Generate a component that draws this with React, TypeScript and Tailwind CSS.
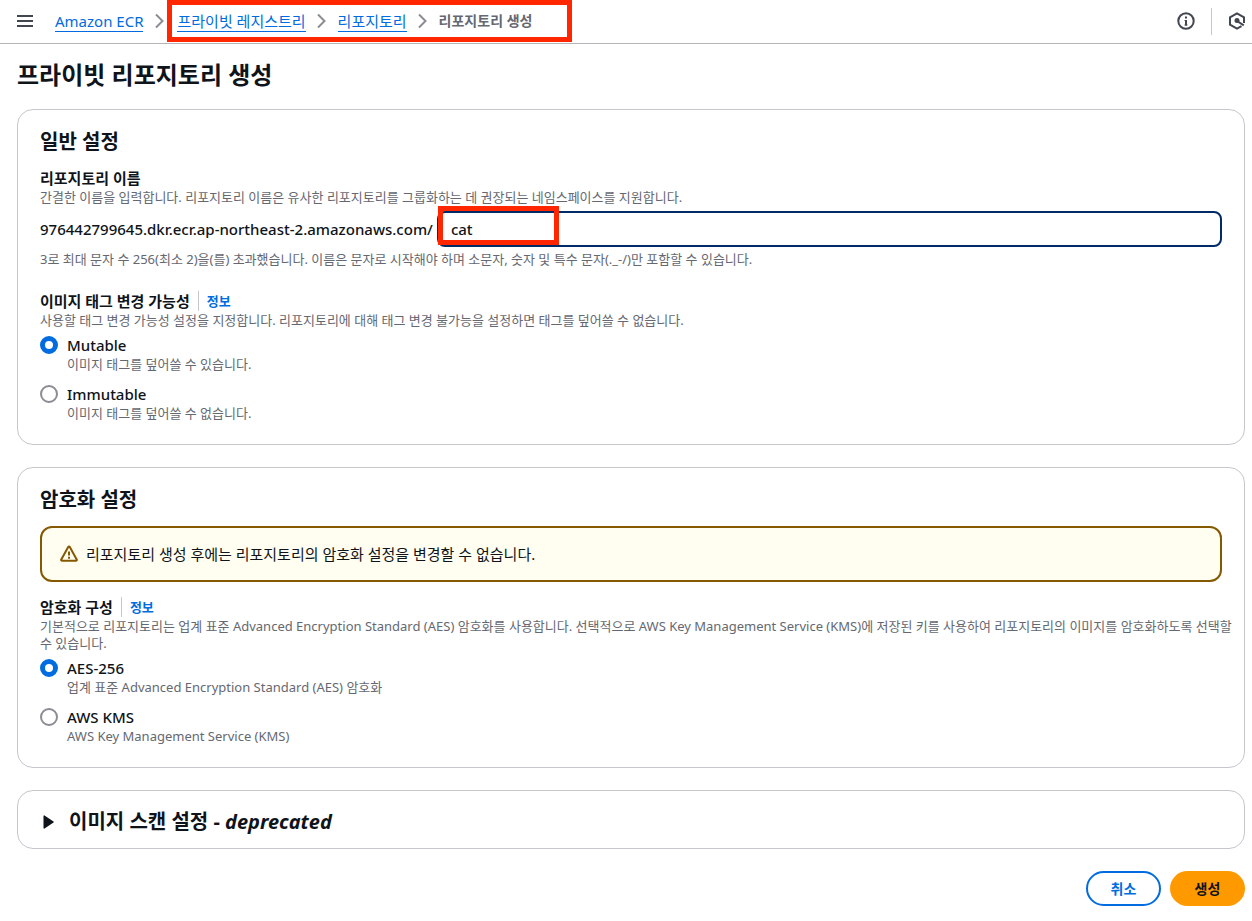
import { useState, type ReactNode } from "react";

function Chevron() {
  return (
    <svg className="size-4 shrink-0" viewBox="0 0 16 16" fill="none" stroke="#8c8c94" strokeWidth="2" aria-hidden="true">
      <path d="M4 1.500 10.500 8 4 14.500" />
    </svg>
  );
}

function Crumb({ children }: { children: ReactNode }) {
  return (
    <a href="#" className="border-b border-[#006ce0] text-[#006ce0]">
      {children}
    </a>
  );
}

function Card({ title, children }: { title: string; children: ReactNode }) {
  return (
    <section className="rounded-2xl border border-[#c6c6cd] px-[22px] pt-[18px] pb-[22px]">
      <h2 className="mb-3 text-xl leading-7 font-bold">{title}</h2>
      {children}
    </section>
  );
}

function FieldLabel({ children }: { children: ReactNode }) {
  return (
    <div className="flex h-5 items-center">
      <span className="text-[15px] leading-5 font-bold">{children}</span>
      <a href="#" className="ml-2 border-l border-[#c6c6cd] pl-2 text-[13px] leading-5 font-bold text-[#006ce0]">
        정보
      </a>
    </div>
  );
}

function Description({ children, id }: { children: ReactNode; id?: string }) {
  return (
    <p id={id} className="-mr-4 pt-px text-[13px] leading-[17px] text-[#656871]">
      {children}
    </p>
  );
}

type Option = { value: string; label: string; description: string };

function RadioGroup({ name, label, options }: { name: string; label: string; options: Option[] }) {
  const [selected, setSelected] = useState(options[0].value);
  return (
    <div role="radiogroup" aria-label={label} className="mt-1.5 flex flex-col gap-[11px]">
      {options.map((option) => (
        <label key={option.value} className="flex items-start gap-[9px]">
          <input
            type="radio"
            name={name}
            value={option.value}
            checked={selected === option.value}
            onChange={() => setSelected(option.value)}
            className="mt-px size-[18px] shrink-0 appearance-none rounded-full border-2 border-[#8c8c94] bg-white checked:border-[5px] checked:border-[#006ce0]"
          />
          <span className="flex flex-col">
            <span className="text-[15px] leading-5 font-medium">{option.label}</span>
            <span className="pt-px text-[13px] leading-[17px] text-[#656871]">{option.description}</span>
          </span>
        </label>
      ))}
    </div>
  );
}

export default function App() {
  const [name, setName] = useState("cat");

  return (
    <div className="bg-white font-['Noto_Sans','Noto_Sans_CJK_KR',sans-serif] text-[#0f141a]">
      <header className="flex h-11 items-center border-b border-[#b4b4bb] pr-1.5 pb-px pl-[17px]">
        <button type="button" aria-label="메뉴" className="mr-[22px]">
          <svg className="h-4 w-4" viewBox="0 0 16 16" stroke="#424650" strokeWidth="2" aria-hidden="true">
            <path d="M0 3h16M0 8h16M0 13h16" />
          </svg>
        </button>
        <nav aria-label="탐색 경로" className="flex items-center gap-[9px] text-[15px] leading-5">
          <Crumb>Amazon ECR</Crumb>
          <Chevron />
          <div className="relative flex items-center gap-2">
            <Crumb>프라이빗 레지스트리</Crumb>
            <Chevron />
            <Crumb>리포지토리</Crumb>
            <Chevron />
            <span className="text-sm leading-5 font-bold text-[#656871]">리포지토리 생성</span>
            <div className="pointer-events-none absolute -top-[11px] -right-10 -bottom-2.5 -left-2.5 border-[5px] border-[#ff2600]" />
          </div>
        </nav>
        <div className="ml-auto flex items-center">
          <button type="button" aria-label="정보">
            <svg className="size-[18px]" viewBox="0 0 18 18" fill="none" stroke="#424650" strokeWidth="2" aria-hidden="true">
              <circle cx="9" cy="9" r="7.700" />
              <path d="M9 4.500v2M9 8v5.500" />
              <path d="M7.500 8.500H9M7.500 13h3" strokeWidth="1" />
            </svg>
          </button>
          <span className="mr-4 ml-4 h-[27px] w-px bg-[#c6c6cd]" />
          <button type="button" aria-label="도구">
            <svg className="size-[18px]" viewBox="0 0 18 18" fill="none" stroke="#424650" strokeWidth="2" aria-hidden="true">
              <path d="M16 11V5.300L9 1.400 2 5.300v7.400L9 16.600l4.500-2.500" />
              <circle cx="9" cy="8.600" r="2.500" fill="#424650" stroke="none" />
              <path d="m9 9 6.800 4.400" />
            </svg>
          </button>
        </div>
      </header>

      <main className="pr-[7px] pb-[15px] pl-[17px]">
        <h1 className="pt-[15px] pb-[18px] text-2xl leading-8 font-bold">프라이빗 리포지토리 생성</h1>

        <form className="flex flex-col gap-[22px]" onSubmit={(event) => event.preventDefault()}>
          <Card title="일반 설정">
            <label htmlFor="repository-name" className="block text-[15px] leading-5 font-bold">
              리포지토리 이름
            </label>
            <Description>
              간결한 이름을 입력합니다. 리포지토리 이름은 유사한 리포지토리를 그룹화하는 데 권장되는 네임스페이스를 지원합니다.
            </Description>
            <div className="mt-[5px] flex items-center gap-1">
              <span className="text-[15px] leading-5 font-medium">976442799645.dkr.ecr.ap-northeast-2.amazonaws.com/</span>
              <div className="relative flex-1">
                <input
                  id="repository-name"
                  type="text"
                  value={name}
                  onChange={(event) => setName(event.target.value)}
                  aria-describedby="repository-name-rules"
                  className="block h-9 w-full rounded-lg border-2 border-[#002b66] px-3 text-[15px] font-medium outline-none"
                />
                <div className="pointer-events-none absolute -top-[5px] left-px h-[39px] w-[121px] border-[5px] border-[#ff2600]" />
              </div>
            </div>
            <div className="mt-[3px] mb-[23px]">
              <Description id="repository-name-rules">
                3로 최대 문자 수 256(최소 2)을(를) 초과했습니다. 이름은 문자로 시작해야 하며 소문자, 숫자 및 특수 문자(._-/)만 포함할 수 있습니다.
              </Description>
            </div>
            <FieldLabel>이미지 태그 변경 가능성</FieldLabel>
            <Description>
              사용할 태그 변경 가능성 설정을 지정합니다. 리포지토리에 대해 태그 변경 불가능을 설정하면 태그를 덮어쓸 수 없습니다.
            </Description>
            <RadioGroup
              name="tag-mutability"
              label="이미지 태그 변경 가능성"
              options={[
                { value: "mutable", label: "Mutable", description: "이미지 태그를 덮어쓸 수 있습니다." },
                { value: "immutable", label: "Immutable", description: "이미지 태그를 덮어쓸 수 없습니다." },
              ]}
            />
          </Card>

          <Card title="암호화 설정">
            <div role="alert" className="mb-[15px] flex h-14 items-center gap-2 rounded-xl border-2 border-[#855900] bg-[#fffef0] px-[18px]">
              <svg className="size-[18px] shrink-0" viewBox="0 0 18 18" fill="none" stroke="#855900" strokeWidth="2" strokeLinejoin="round" aria-hidden="true">
                <path d="M8.200 2.100a.9.9 0 0 1 1.600 0l6.900 12.300a.9.9 0 0 1-.8 1.400H2.100a.9.9 0 0 1-.8-1.400Z" />
                <path d="M9 6.500v4M9 11.800v2" />
              </svg>
              <span className="text-[15px] leading-5">
                리포지토리 생성 후에는 리포지토리의 암호화 설정을 변경할 수 없습니다.
              </span>
            </div>
            <FieldLabel>암호화 구성</FieldLabel>
            <Description>
              기본적으로 리포지토리는 업계 표준 Advanced Encryption Standard (AES) 암호화를 사용합니다. 선택적으로 AWS Key Management Service (KMS)에 저장된 키를 사용하여 리포지토리의 이미지를 암호화하도록 선택할 수 있습니다.
            </Description>
            <RadioGroup
              name="encryption"
              label="암호화 구성"
              options={[
                { value: "aes", label: "AES-256", description: "업계 표준 Advanced Encryption Standard (AES) 암호화" },
                { value: "kms", label: "AWS KMS", description: "AWS Key Management Service (KMS)" },
              ]}
            />
          </Card>

          <section className="rounded-2xl border border-[#c6c6cd] px-[22px] pt-[17px] pb-3">
            <h2 className="text-xl leading-7 font-bold">
              <button type="button" aria-expanded="false" className="flex items-center gap-[11px]">
                <svg className="size-[18px]" viewBox="0 0 18 18" fill="#0f141a" aria-hidden="true">
                  <path d="M3.500 3v12a.6.6 0 0 0 1 .5l9-6a.6.6 0 0 0 0-1l-9-6a.6.6 0 0 0-1 .5Z" />
                </svg>
                <span>
                  이미지 스캔 설정 - <em>deprecated</em>
                </span>
              </button>
            </h2>
          </section>

          <div className="flex justify-end gap-[9px] text-sm font-bold">
            <button type="button" className="h-[35px] w-[75px] rounded-full border-2 border-[#006ce0] text-[#006ce0]">
              취소
            </button>
            <button type="submit" className="h-[35px] w-[75px] rounded-full bg-[#ff9900]">
              생성
            </button>
          </div>
        </form>
      </main>
    </div>
  );
}
